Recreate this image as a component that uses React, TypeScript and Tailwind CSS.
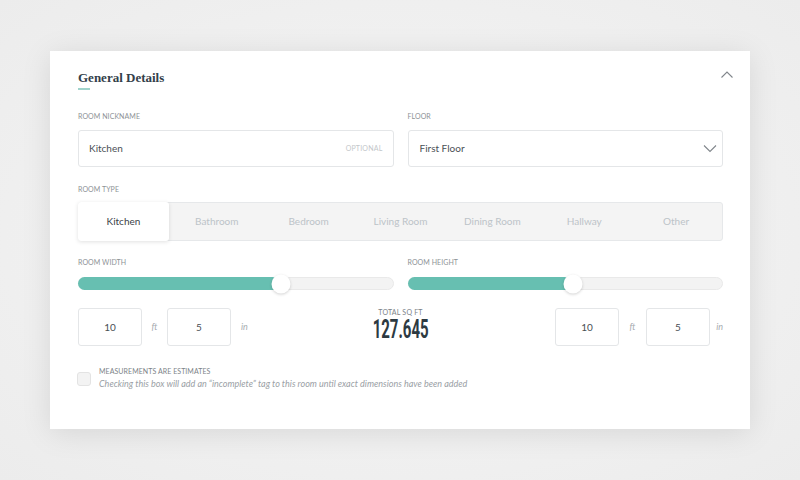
import React from "react";

const sans = { fontFamily: "Lato, 'Open Sans', sans-serif" };

function Label({ children }: { children: React.ReactNode }) {
  return (
    <div className="text-[7px] leading-[10px] uppercase tracking-[0.01em] text-[#8d9296]">
      {children}
    </div>
  );
}

function Slider({ pct }: { pct: number }) {
  return (
    <div className="relative h-[13px] rounded-full bg-[#f3f3f3] border border-[#e9e9e9]">
      <div
        className="absolute left-[-1px] top-[-1px] bottom-[-1px] rounded-l-full bg-[#67bfb1]"
        style={{ width: `${pct}%` }}
      />
      <div
        className="absolute top-1/2 w-[19px] h-[19px] -translate-x-1/2 -translate-y-1/2 rounded-full bg-white shadow-[0_1px_3px_rgba(0,0,0,0.18)]"
        style={{ left: `${pct}%` }}
      />
    </div>
  );
}

function NumBox({ v }: { v: string }) {
  return (
    <div className="w-[64px] h-[38px] rounded-[3px] border border-[#e4e6e8] bg-white flex items-center justify-center text-[10px] text-[#4a5055]">
      {v}
    </div>
  );
}

function Unit({ children, cls }: { children: React.ReactNode; cls: string }) {
  return <span className={`${cls} text-[9px] italic text-[#a6abaf]`}>{children}</span>;
}

export default function App() {
  const types = ["Kitchen", "Bathroom", "Bedroom", "Living Room", "Dining Room", "Hallway", "Other"];
  return (
    <div
      className="w-[800px] h-[480px] bg-[radial-gradient(ellipse_at_center,#f6f6f6_0%,#ececec_100%)] pt-[51px] pl-[50px]"
      style={sans}
    >
      <div className="w-[700px] h-[378px] bg-white shadow-[0_4px_28px_rgba(0,0,0,0.10)] pl-[28px] pr-[27px] pt-[18px]">
        {/* Header */}
        <div className="flex justify-between items-start">
          <div>
            <div
              className="text-[13px] leading-[18px] font-bold text-[#33404a]"
              style={{ fontFamily: "'Liberation Serif', 'DejaVu Serif', serif" }}
            >
              General Details
            </div>
            <div className="mt-[1px] w-[12px] h-[2px] bg-[#9fd3cb]" />
          </div>
          <svg width="14" height="9" viewBox="0 0 14 9" className="mt-[1px] mr-[-11px]">
            <path d="M1.5 7.5 L7 2 L12.5 7.5" fill="none" stroke="#80868b" strokeWidth="1.1" />
          </svg>
        </div>

        {/* Nickname / Floor */}
        <div className="grid grid-cols-2 gap-[14px] mt-[21px]">
          <div>
            <Label>Room Nickname</Label>
            <div className="mt-[9px] h-[37px] rounded-[3px] border border-[#e4e6e8] flex items-center justify-between pl-[10px] pr-[10px]">
              <span className="text-[10px] text-[#4a5055]">Kitchen</span>
              <span className="text-[7px] tracking-[0.03em] text-[#c3c7ca]">OPTIONAL</span>
            </div>
          </div>
          <div>
            <Label>Floor</Label>
            <div className="mt-[9px] h-[37px] rounded-[3px] border border-[#e4e6e8] flex items-center justify-between pl-[11px] pr-[5px]">
              <span className="text-[10px] text-[#4a5055]">First Floor</span>
              <svg width="14" height="9" viewBox="0 0 14 9">
                <path d="M1 1.5 L7 7.5 L13 1.5" fill="none" stroke="#80868b" strokeWidth="1.1" />
              </svg>
            </div>
          </div>
        </div>

        {/* Room type */}
        <div className="mt-[17px]">
          <Label>Room Type</Label>
          <div className="mt-[8px] h-[39px] rounded-[3px] border border-[#e6e8ea] bg-[#f4f4f4] grid grid-cols-7">
            {types.map((t, i) =>
              i === 0 ? (
                <div
                  key={t}
                  className="my-[-1px] ml-[-1px] mr-[2px] rounded-[3px] bg-white shadow-[0_1px_4px_rgba(0,0,0,0.12)] flex items-center justify-center text-[10px] text-[#3b4247]"
                >
                  {t}
                </div>
              ) : (
                <div key={t} className="flex items-center justify-center text-[10px] text-[#bcc3c8]">
                  {t}
                </div>
              )
            )}
          </div>
        </div>

        {/* Sliders */}
        <div className="grid grid-cols-2 gap-[14px] mt-[16px]">
          <div>
            <Label>Room Width</Label>
            <div className="mt-[10px]">
              <Slider pct={64.5} />
            </div>
          </div>
          <div>
            <Label>Room Height</Label>
            <div className="mt-[10px]">
              <Slider pct={52.5} />
            </div>
          </div>
        </div>

        {/* Dimensions */}
        <div className="grid grid-cols-[1fr_auto_1fr] items-center mt-[18px]">
          <div className="flex items-center">
            <NumBox v="10" />
            <Unit cls="w-[25px] text-center">ft</Unit>
            <NumBox v="5" />
            <Unit cls="pl-[10px]">in</Unit>
          </div>
          <div className="flex flex-col items-center">
            <div className="text-[7px] leading-[9px] tracking-[0.03em] text-[#7d8388] mt-[-5px]">TOTAL SQ FT</div>
            <div
              className="text-[25px] leading-[24px] font-bold text-[#2d3a42] scale-x-[0.6] mt-[1px]"
              style={{ fontFamily: "Roboto, 'Liberation Sans', sans-serif" }}
            >
              127.645
            </div>
          </div>
          <div className="flex items-center justify-end">
            <NumBox v="10" />
            <Unit cls="w-[27px] text-center">ft</Unit>
            <NumBox v="5" />
            <Unit cls="w-[13px] text-right">in</Unit>
          </div>
        </div>

        {/* Checkbox */}
        <div className="flex items-start mt-[20px] ml-[-1px]">
          <div className="mt-[6px] w-[14px] h-[14px] rounded-[3px] bg-[#f3f3f3] border border-[#e3e3e3]" />
          <div className="ml-[8px]">
            <div className="text-[7px] leading-[10px] tracking-[0.01em] text-[#7d8388]">MEASUREMENTS ARE ESTIMATES</div>
            <div className="text-[9px] leading-[14px] italic text-[#9aa0a5] mt-[1px]">
              Checking this box will add an “incomplete” tag to this room until exact dimensions have been added
            </div>
          </div>
        </div>
      </div>
    </div>
  );
}
